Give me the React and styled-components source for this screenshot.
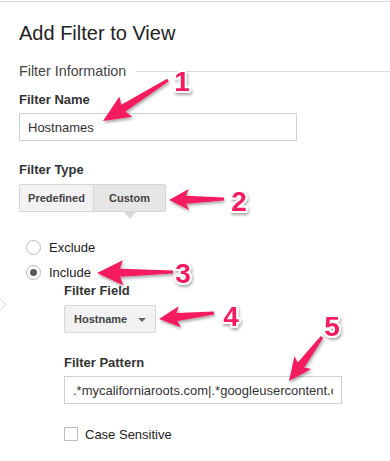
import React from 'react';
import styled, { createGlobalStyle } from 'styled-components';

const GlobalStyle = createGlobalStyle`
  html, body {
    margin: 0;
    padding: 0;
    background: #fff;
  }
  body {
    font-family: "Liberation Sans", Arial, sans-serif;
    color: #333;
    overflow: hidden;
  }
`

const Page = styled.div`
  position: relative;
  width: 390px;
  height: 460px;
  margin-top: 1px;
  border-top: 1px solid #d4d4d4;
  overflow: hidden;
  padding-left: 19px;
  box-sizing: border-box;
`

const Title = styled.h1`
  margin: 19px 0 0;
  font-size: 20px;
  line-height: 24px;
  font-weight: 400;
  color: #222;
`

const SectionHead = styled.div`
  display: flex;
  align-items: center;
  margin-top: 17px;
  margin-right: -19px;
  font-size: 14.3px;
  line-height: 18px;
  color: #444;

  &::after {
    content: '';
    flex: 1;
    height: 1px;
    margin-left: 10px;
    background: #dcdcdc;
  }
`

const Label = styled.div`
  margin-top: ${(p) => p.$top || 0}px;
  font-size: 13px;
  line-height: 16px;
  font-weight: 700;
  color: #333;
`

const TextField = styled.input`
  display: block;
  box-sizing: border-box;
  margin-top: 5px;
  width: ${(p) => p.$width}px;
  height: 28px;
  padding: 0 8px;
  border: 1px solid #cfcfcf;
  border-radius: 0;
  font-family: inherit;
  font-size: 13px;
  color: #333;
  background: #fff;
  outline: none;
`

const Segmented = styled.div`
  display: flex;
  margin-top: 6px;
`

const Segment = styled.div`
  position: relative;
  box-sizing: border-box;
  width: ${(p) => p.$width}px;
  height: 28px;
  display: flex;
  align-items: center;
  justify-content: center;
  border: 1px solid #d5d5d5;
  margin-left: ${(p) => (p.$first ? 0 : -1)}px;
  border-radius: ${(p) => (p.$first ? '2px 0 0 2px' : '0 2px 2px 0')};
  background: ${(p) => (p.$active ? '#e6e6e6' : '#f2f2f2')};
  font-size: 11px;
  font-weight: 700;
  color: #444;

  ${(p) =>
    p.$active &&
    `
    &::after {
      content: '';
      position: absolute;
      left: 50%;
      bottom: -8px;
      margin-left: -7px;
      border-left: 7px solid transparent;
      border-right: 7px solid transparent;
      border-top: 8px solid #d9d9d9;
    }
  `}
`

const RadioList = styled.div`
  display: flex;
  flex-direction: column;
  gap: 5px;
  margin-top: 25px;
  padding-left: 7px;
`

const RadioRow = styled.label`
  display: flex;
  align-items: center;
  height: 20px;
  font-size: 13px;
  color: #222;
`

const RadioDot = styled.span`
  position: relative;
  box-sizing: border-box;
  width: 15px;
  height: 15px;
  margin-right: 8px;
  border-radius: 50%;
  border: 1px solid #b9b9b9;
  background: #fff;

  ${(p) =>
    p.$checked &&
    `
    &::after {
      content: '';
      position: absolute;
      left: 3px;
      top: 3px;
      width: 7px;
      height: 7px;
      border-radius: 50%;
      background: #5a5a5a;
    }
  `}
`

const Nested = styled.div`
  padding-left: 45px;
`

const Dropdown = styled.div`
  box-sizing: border-box;
  display: flex;
  align-items: center;
  justify-content: space-between;
  width: 92px;
  height: 28px;
  margin-top: 6px;
  padding: 0 9px 0 9px;
  border: 1px solid #d8d8d8;
  border-radius: 2px;
  background: #f2f2f2;
  font-size: 11px;
  font-weight: 700;
  color: #444;

  &::after {
    content: '';
    border-left: 4px solid transparent;
    border-right: 4px solid transparent;
    border-top: 4px solid #666;
    margin-top: 2px;
  }
`

const CheckRow = styled.label`
  display: flex;
  align-items: center;
  height: 16px;
  margin-top: 22px;
  font-size: 13px;
  color: #222;
`

const CheckBox = styled.span`
  box-sizing: border-box;
  width: 14px;
  height: 14px;
  margin-right: 7px;
  border: 1px solid #bdbdbd;
  background: #fff;
`

const EdgeNub = styled.div`
  position: absolute;
  left: -9px;
  top: 296px;
  width: 11px;
  height: 11px;
  border: 1px solid #e2e2e2;
  background: #fff;
  transform: rotate(45deg);
`

const Overlay = styled.svg`
  position: absolute;
  left: 0;
  top: 0;
  width: 390px;
  height: 461px;
  pointer-events: none;
`

const Num = styled.text`
  font-family: "Liberation Sans", Arial, sans-serif;
  font-size: 28px;
  font-weight: 700;
  fill: #f41a5f;
  stroke: #fff;
  stroke-width: 4px;
  stroke-linejoin: round;
  paint-order: stroke;
  text-anchor: middle;
`

const PINK = '#f41a5f'

const arrows = [
  { tail: [168, 78], tip: [103, 119], head: 24, half: 12, label: '1', at: [182, 89] },
  { tail: [224, 197], tip: [169, 198], head: 17, half: 10.5, label: '2', at: [239, 209] },
  { tail: [173, 270], tip: [97, 271], head: 23, half: 12.5, label: '3', at: [183, 281] },
  { tail: [214, 311], tip: [159, 317], head: 18, half: 10.5, label: '4', at: [231, 324] },
  { tail: [322, 335], tip: [289, 379], head: 20, half: 10.5, label: '5', at: [332, 334] },
]

function arrowPoints({ tail, tip, head, half }) {
  const dx = tip[0] - tail[0]
  const dy = tip[1] - tail[1]
  const len = Math.hypot(dx, dy)
  const ux = dx / len
  const uy = dy / len
  const nx = -uy
  const ny = ux
  const bx = tip[0] - ux * head
  const by = tip[1] - uy * head
  const tw = 1.5
  const sw = 4
  const pts = [
    [tail[0] + nx * tw, tail[1] + ny * tw],
    [bx + nx * sw, by + ny * sw],
    [bx - ux * 3 + nx * half, by - uy * 3 + ny * half],
    tip,
    [bx - ux * 3 - nx * half, by - uy * 3 - ny * half],
    [bx - nx * sw, by - ny * sw],
    [tail[0] - nx * tw, tail[1] - ny * tw],
  ]
  return pts.map((p) => p.map((v) => v.toFixed(1)).join(',')).join(' ')
}

const Annotations = () => (
  <Overlay viewBox="0 0 390 461">
    <defs>
      <filter id="soft" x="-20%" y="-20%" width="140%" height="140%">
        <feDropShadow dx="1" dy="2" stdDeviation="1.4" floodColor="#000" floodOpacity="0.35" />
      </filter>
    </defs>
    {arrows.map((a) => (
      <g key={a.label} filter="url(#soft)">
        <polygon points={arrowPoints(a)} fill={PINK} />
        <Num x={a.at[0]} y={a.at[1]}>{a.label}</Num>
      </g>
    ))}
  </Overlay>
)

const App = () => {
  return (
    <>
      <GlobalStyle />
      <Page>
        <Title>Add Filter to View</Title>
        <SectionHead>Filter Information</SectionHead>

        <Label $top={12}>Filter Name</Label>
        <TextField $width={278} readOnly value="Hostnames" />

        <Label $top={21}>Filter Type</Label>
        <Segmented>
          <Segment $first $width={75}>Predefined</Segment>
          <Segment $active $width={73}>Custom</Segment>
        </Segmented>

        <RadioList>
          <RadioRow>
            <RadioDot />
            Exclude
          </RadioRow>
          <RadioRow>
            <RadioDot $checked />
            Include
          </RadioRow>
        </RadioList>

        <Nested>
          <Label $top={1}>Filter Field</Label>
          <Dropdown>Hostname</Dropdown>

          <Label $top={22}>Filter Pattern</Label>
          <TextField
            $width={278}
            readOnly
            value=".*mycaliforniaroots.com|.*googleusercontent.com"
          />

          <CheckRow>
            <CheckBox />
            Case Sensitive
          </CheckRow>
        </Nested>

        <EdgeNub />
        <Annotations />
      </Page>
    </>
  )
}

export default App
